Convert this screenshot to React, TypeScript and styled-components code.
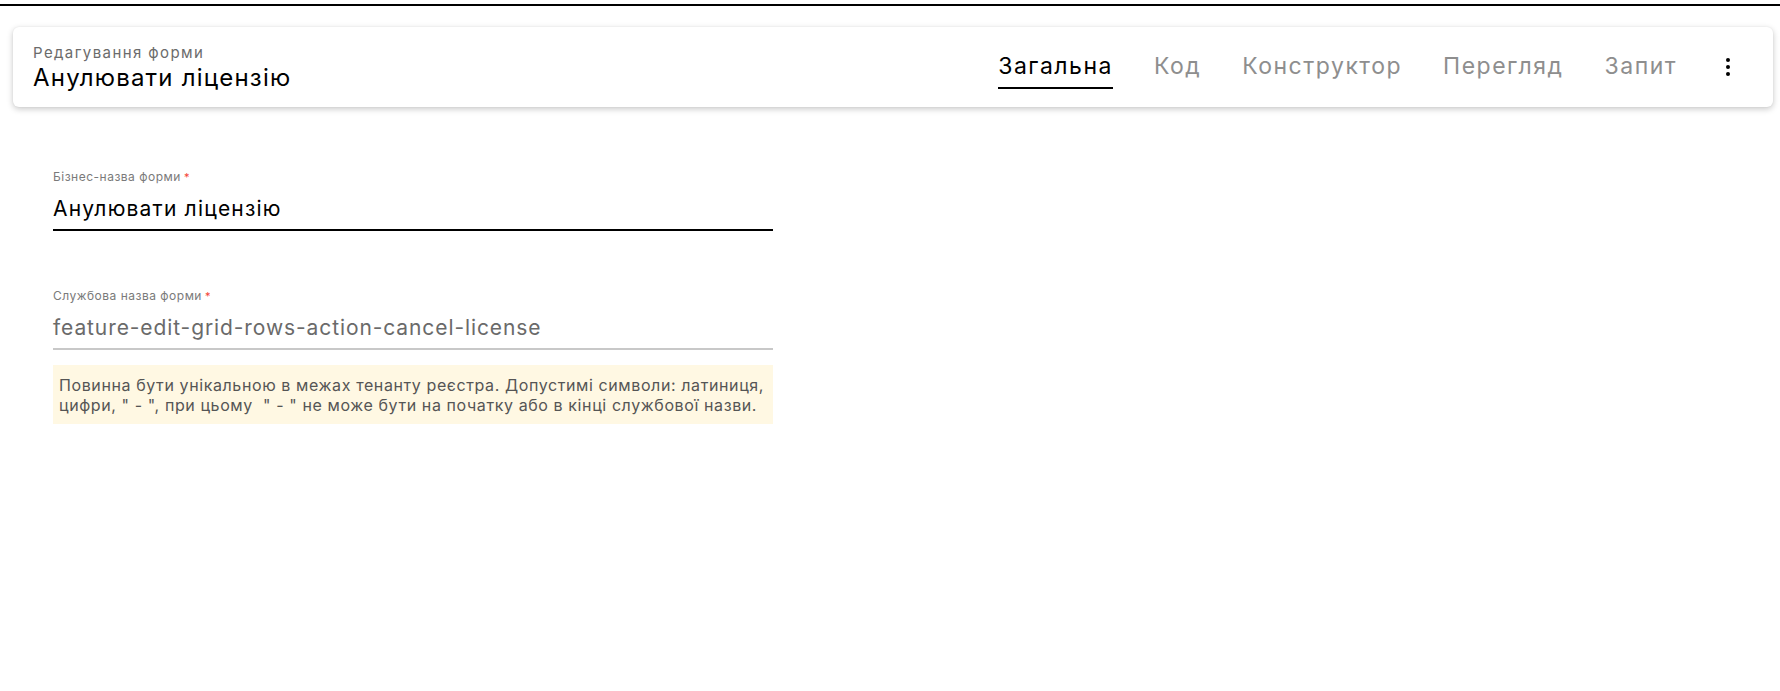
import React from "react";
import styled, { createGlobalStyle } from "styled-components";

const GlobalStyle = createGlobalStyle`
  html, body {
    margin: 0;
    padding: 0;
    background: #ffffff;
    font-family: Inter, "Noto Sans", "Liberation Sans", sans-serif;
    color: #000;
  }
  * { box-sizing: border-box; }
`;

const Page = styled.div`
  display: flex;
  flex-direction: column;
  min-height: 691px;
`;

const TopRule = styled.div`
  height: 2px;
  margin-top: 4px;
  background: #000;
`;

const HeaderCard = styled.header`
  display: flex;
  align-items: stretch;
  height: 80px;
  margin: 21px 7px 0 13px;
  padding: 0 33px 0 20px;
  background: #fff;
  border-radius: 6px;
  box-shadow: 0 2px 6px rgba(0, 0, 0, 0.22), 0 0 2px rgba(0, 0, 0, 0.06);
`;

const TitleBlock = styled.div`
  display: flex;
  flex-direction: column;
  padding-top: 17px;
  flex: 1;
`;

const Subtitle = styled.div`
  font-size: 15px;
  line-height: 18px;
  letter-spacing: 1.4px;
  color: #6b6b6b;
`;

const Title = styled.div`
  font-size: 24px;
  line-height: 30px;
  letter-spacing: 1.2px;
  color: #000;
  margin-top: 1px;
`;

const Tabs = styled.nav`
  display: flex;
  align-items: flex-start;
  gap: 41px;
  padding-top: 25px;
`;

const Tab = styled.div<{ $active?: boolean }>`
  font-size: 23px;
  line-height: 28px;
  letter-spacing: 1.5px;
  padding-bottom: 7px;
  border-bottom: 2px solid ${(p) => (p.$active ? "#000" : "transparent")};
  color: ${(p) => (p.$active ? "#000" : "#8e8e8e")};
  white-space: nowrap;
  cursor: pointer;
`;

const MenuButton = styled.div`
  align-self: center;
  width: 24px;
  height: 24px;
  margin-left: 39px;
  display: flex;
  align-items: center;
  justify-content: center;
`;

const Form = styled.main`
  display: flex;
  flex-direction: column;
  width: 720px;
  margin: 62px 0 0 53px;
`;

const Field = styled.div<{ $spaced?: boolean }>`
  display: flex;
  flex-direction: column;
  margin-top: ${(p) => (p.$spaced ? "57px" : "0")};
`;

const Label = styled.label`
  font-size: 12px;
  line-height: 16px;
  letter-spacing: 0.5px;
  color: #7a7a7a;
`;

const Required = styled.span`
  color: #f44336;
  margin-left: 3px;
  font-size: 11px;
  vertical-align: top;
`;

const Value = styled.div<{ $muted?: boolean }>`
  margin-top: 10px;
  font-size: 21px;
  line-height: 28px;
  letter-spacing: ${(p) => (p.$muted ? "0.9px" : "1.2px")};
  padding-bottom: 6px;
  color: ${(p) => (p.$muted ? "#6a6a6a" : "#000")};
  border-bottom: 2px solid ${(p) => (p.$muted ? "#c8c8c8" : "#000")};
`;

const Hint = styled.div`
  margin-top: 15px;
  padding: 10px 2px 9px 6px;
  background: #fff8e3;
  font-size: 16px;
  line-height: 20px;
  letter-spacing: 0.6px;
  color: #555;
`;

const MoreIcon = () => (
  <svg width="24" height="24" viewBox="0 0 24 24" fill="#000">
    <circle cx="12" cy="5" r="2" />
    <circle cx="12" cy="12" r="2" />
    <circle cx="12" cy="19" r="2" />
  </svg>
);

const tabs = ["Загальна", "Код", "Конструктор", "Перегляд", "Запит"];

export default function App() {
  return (
    <Page>
      <GlobalStyle />
      <TopRule />
      <HeaderCard>
        <TitleBlock>
          <Subtitle>Редагування форми</Subtitle>
          <Title>Анулювати ліцензію</Title>
        </TitleBlock>
        <Tabs>
          {tabs.map((t, i) => (
            <Tab key={t} $active={i === 0}>
              {t}
            </Tab>
          ))}
        </Tabs>
        <MenuButton>
          <MoreIcon />
        </MenuButton>
      </HeaderCard>
      <Form>
        <Field>
          <Label>
            Бізнес-назва форми<Required>*</Required>
          </Label>
          <Value>Анулювати ліцензію</Value>
        </Field>
        <Field $spaced>
          <Label>
            Службова назва форми<Required>*</Required>
          </Label>
          <Value $muted>feature-edit-grid-rows-action-cancel-license</Value>
        </Field>
        <Hint>
          Повинна бути унікальною в межах тенанту реєстра. Допустимі символи: латиниця,
          цифри, " - ", при цьому &nbsp;" - " не може бути на початку або в кінці службової назви.
        </Hint>
      </Form>
    </Page>
  );
}
